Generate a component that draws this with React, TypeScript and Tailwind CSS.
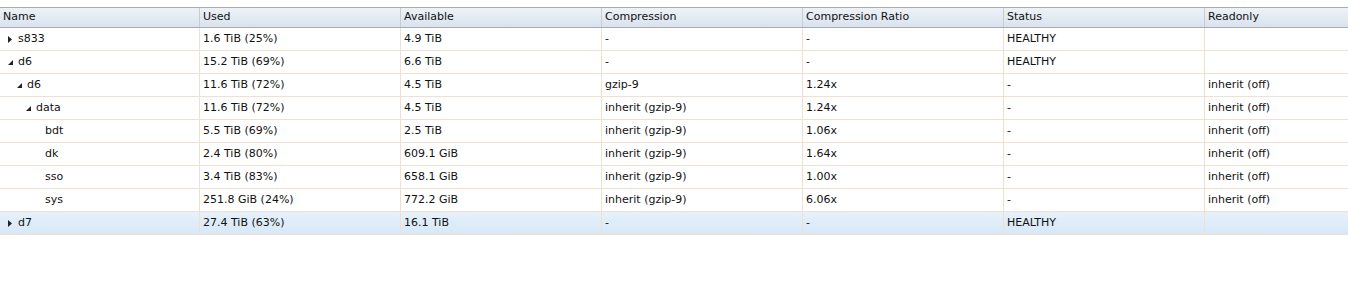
import React from "react";

type Row = {
  name: string;
  level: number;
  toggle?: "open" | "closed";
  used: string;
  available: string;
  compression: string;
  ratio: string;
  status: string;
  readonly: string;
  selected?: boolean;
};

const COLUMNS = ["Name", "Used", "Available", "Compression", "Compression Ratio", "Status", "Readonly"];

const ROWS: Row[] = [
  { name: "s833", level: 0, toggle: "closed", used: "1.6 TiB (25%)", available: "4.9 TiB", compression: "-", ratio: "-", status: "HEALTHY", readonly: "" },
  { name: "d6", level: 0, toggle: "open", used: "15.2 TiB (69%)", available: "6.6 TiB", compression: "-", ratio: "-", status: "HEALTHY", readonly: "" },
  { name: "d6", level: 1, toggle: "open", used: "11.6 TiB (72%)", available: "4.5 TiB", compression: "gzip-9", ratio: "1.24x", status: "-", readonly: "inherit (off)" },
  { name: "data", level: 2, toggle: "open", used: "11.6 TiB (72%)", available: "4.5 TiB", compression: "inherit (gzip-9)", ratio: "1.24x", status: "-", readonly: "inherit (off)" },
  { name: "bdt", level: 3, used: "5.5 TiB (69%)", available: "2.5 TiB", compression: "inherit (gzip-9)", ratio: "1.06x", status: "-", readonly: "inherit (off)" },
  { name: "dk", level: 3, used: "2.4 TiB (80%)", available: "609.1 GiB", compression: "inherit (gzip-9)", ratio: "1.64x", status: "-", readonly: "inherit (off)" },
  { name: "sso", level: 3, used: "3.4 TiB (83%)", available: "658.1 GiB", compression: "inherit (gzip-9)", ratio: "1.00x", status: "-", readonly: "inherit (off)" },
  { name: "sys", level: 3, used: "251.8 GiB (24%)", available: "772.2 GiB", compression: "inherit (gzip-9)", ratio: "6.06x", status: "-", readonly: "inherit (off)" },
  { name: "d7", level: 0, toggle: "closed", used: "27.4 TiB (63%)", available: "16.1 TiB", compression: "-", ratio: "-", status: "HEALTHY", readonly: "", selected: true },
];

const grid = "grid grid-cols-[200px_201px_201px_201px_201px_201px_1fr]";

// small tree toggle triangles
function Toggle({ state }: { state: "open" | "closed" }) {
  if (state === "closed") {
    return (
      <svg width="4" height="7" viewBox="0 0 4 7" className="shrink-0">
        <path d="M0 0 L4 3.5 L0 7 Z" fill="#222" />
      </svg>
    );
  }
  return (
    <svg width="5" height="5" viewBox="0 0 5 5" className="shrink-0">
      <path d="M5 0 L5 5 L0 5 Z" fill="#222" />
    </svg>
  );
}

export default function App() {
  return (
    <div className="w-[1348px] h-[303px] bg-white pt-[7px] text-[11px] text-[#111] font-['DejaVu_Sans',Verdana,sans-serif]">
      {/* header */}
      <div className={`${grid} h-[21px] border-y border-[#a9adb2] bg-gradient-to-b from-[#edf2f7] to-[#d9e3ee]`}>
        {COLUMNS.map((c, i) => (
          <div
            key={c}
            className={`flex items-center pl-[3px] ${i < COLUMNS.length - 1 ? "border-r border-[#c5ccd4]" : ""}`}
          >
            {c}
          </div>
        ))}
      </div>

      {/* rows */}
      {ROWS.map((r, idx) => {
        const cells = [r.used, r.available, r.compression, r.ratio, r.status, r.readonly];
        return (
          <div
            key={idx}
            className={`${grid} h-[23px] border-b border-[#f0e0d2] ${r.selected ? "bg-gradient-to-b from-[#e6f1fb] to-[#d7e8f7]" : ""}`}
          >
            <div className="flex items-center border-r border-[#f0e0d2]" style={{ paddingLeft: 8 + r.level * 9 }}>
              <span className="w-[10px] flex items-center">{r.toggle && <Toggle state={r.toggle} />}</span>
              <span>{r.name}</span>
            </div>
            {cells.map((c, i) => (
              <div
                key={i}
                className={`flex items-center pl-[3px] ${i < cells.length - 1 ? "border-r border-[#f0e0d2]" : ""}`}
              >
                {c}
              </div>
            ))}
          </div>
        );
      })}
    </div>
  );
}
